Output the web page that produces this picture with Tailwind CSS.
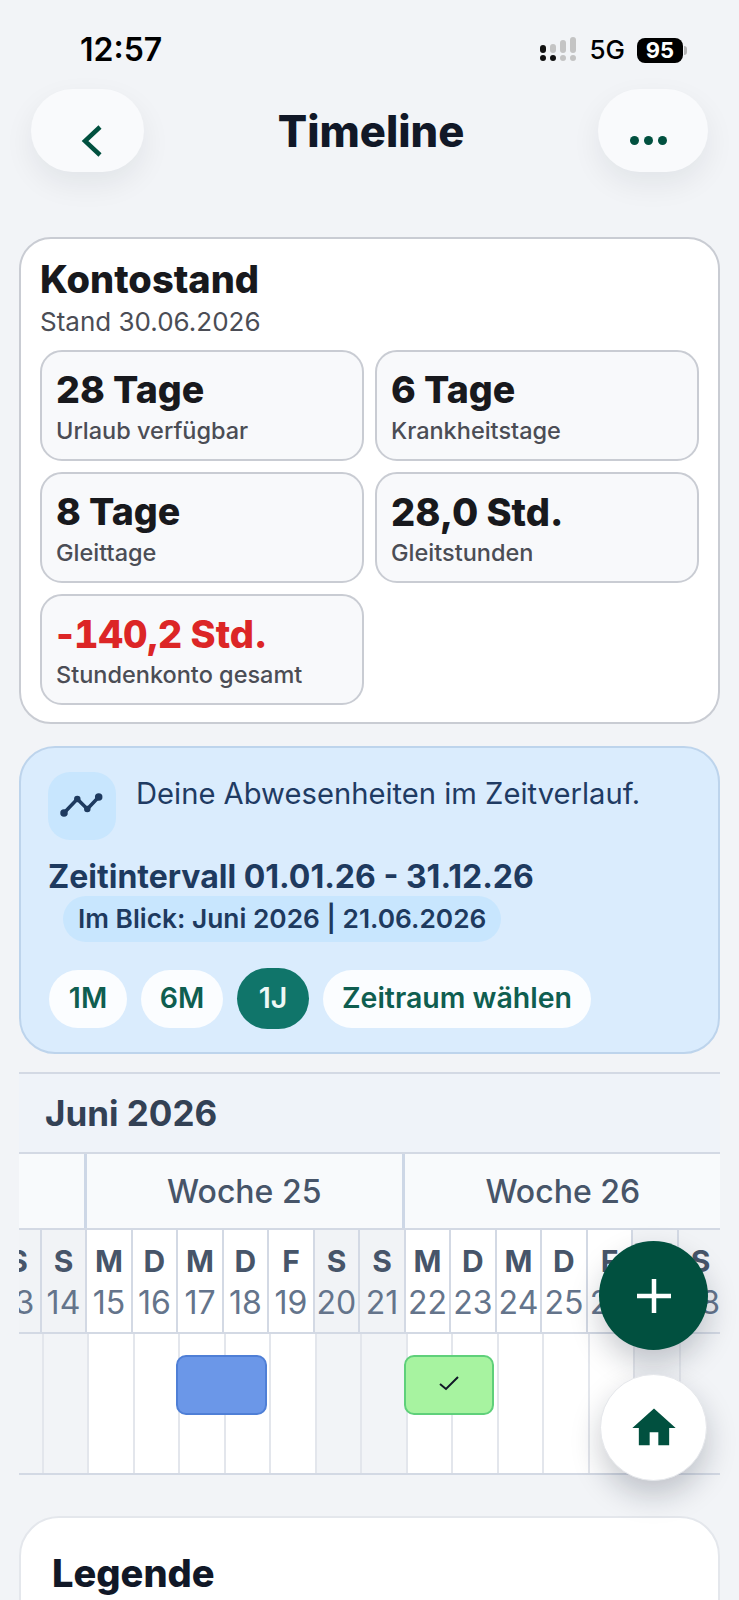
<!DOCTYPE html>
<html lang="de">
<head>
  <meta charset="UTF-8">
  <title>Timeline</title>
  <script src="https://cdn.jsdelivr.net/npm/@tailwindcss/browser@4"></script>
</head>
<body class="relative h-[1600px] w-[739px] overflow-hidden bg-[#f2f4f7] font-[Inter,sans-serif]">

  <!-- status bar -->
  <div class="flex h-[89px] items-start justify-between pl-[80px] pr-[52px] pt-[32px]">
    <span class="text-[32px] leading-[36px] font-semibold text-black">12:57</span>
    <div class="flex items-center pt-[5px]">
      <svg width="36" height="26" viewBox="0 0 36 26">
        <rect x="0" y="8" width="6" height="8" rx="3" fill="#111"/>
        <rect x="10" y="7" width="6" height="9" rx="3" fill="#c4c4c4"/>
        <rect x="20" y="3" width="6" height="13" rx="3" fill="#c4c4c4"/>
        <rect x="30" y="0" width="6" height="16" rx="3" fill="#c4c4c4"/>
        <circle cx="3" cy="21" r="3" fill="#111"/>
        <circle cx="13" cy="21" r="3" fill="#111"/>
        <circle cx="23" cy="21" r="3" fill="#c4c4c4"/>
        <circle cx="33" cy="21" r="3" fill="#c4c4c4"/>
      </svg>
      <span class="ml-[13px] text-[26px] leading-[26px] font-medium text-black">5G</span>
      <span class="ml-[12px] flex h-[25px] w-[46px] items-center justify-center rounded-[8px] bg-black text-[22px] leading-[25px] font-bold text-white">95</span>
      <span class="ml-[1px] h-[9px] w-[3px] rounded-r-full bg-[#b5b5b5]"></span>
    </div>
  </div>

  <!-- header -->
  <div class="flex h-[83px] items-center justify-between pl-[31px] pr-[31px]">
    <button class="flex h-[83px] w-[113px] items-center justify-center rounded-[42px] bg-[#f9fafc] pl-[8px] shadow-[0_12px_30px_rgba(15,23,42,0.07)]">
      <svg class="mt-[20px]" width="22" height="32" viewBox="0 0 22 32" fill="none" stroke="#01503f" stroke-width="4.5">
        <path d="M19 2 L4 16 L19 30"/>
      </svg>
    </button>
    <h1 class="text-[43.5px] leading-[50px] font-extrabold text-[#111827]">Timeline</h1>
    <button class="flex h-[83px] w-[110px] items-center justify-center gap-[5px] rounded-[42px] bg-[#f9fafc] pr-[9px] pt-[19px] shadow-[0_12px_30px_rgba(15,23,42,0.07)]">
      <span class="h-[9px] w-[9px] rounded-full bg-[#01503f]"></span>
      <span class="h-[9px] w-[9px] rounded-full bg-[#01503f]"></span>
      <span class="h-[9px] w-[9px] rounded-full bg-[#01503f]"></span>
    </button>
  </div>

  <main class="mt-[65px] px-[19px]">

    <!-- Kontostand -->
    <section class="h-[487px] rounded-[32px] border-2 border-[#c9ccd3] bg-white px-[19px] pt-[18px]">
      <h2 class="text-[38px] leading-[44px] font-extrabold text-[#18191d]">Kontostand</h2>
      <p class="mt-[6px] text-[26px] leading-[30px] text-[#4b4d55]">Stand 30.06.2026</p>
      <div class="mt-[13px] grid grid-cols-2 gap-[11px]">
        <div class="h-[111px] rounded-[22px] border-2 border-[#c9ccd3] bg-[#f8f9fb] px-[14px] pt-[16px]">
          <div class="text-[37.5px] leading-[44px] font-extrabold text-[#18191d]">28 Tage</div>
          <div class="mt-[4px] text-[23.5px] leading-[30px] font-medium text-[#4b4d55]">Urlaub verfügbar</div>
        </div>
        <div class="h-[111px] rounded-[22px] border-2 border-[#c9ccd3] bg-[#f8f9fb] px-[14px] pt-[16px]">
          <div class="text-[37.5px] leading-[44px] font-extrabold text-[#18191d]">6 Tage</div>
          <div class="mt-[4px] text-[23.5px] leading-[30px] font-medium text-[#4b4d55]">Krankheitstage</div>
        </div>
        <div class="h-[111px] rounded-[22px] border-2 border-[#c9ccd3] bg-[#f8f9fb] px-[14px] pt-[16px]">
          <div class="text-[37.5px] leading-[44px] font-extrabold text-[#18191d]">8 Tage</div>
          <div class="mt-[4px] text-[23.5px] leading-[30px] font-medium text-[#4b4d55]">Gleittage</div>
        </div>
        <div class="h-[111px] rounded-[22px] border-2 border-[#c9ccd3] bg-[#f8f9fb] px-[14px] pt-[16px]">
          <div class="text-[38px] leading-[44px] font-extrabold text-[#18191d]">28,0 Std.</div>
          <div class="mt-[4px] text-[23.5px] leading-[30px] font-medium text-[#4b4d55]">Gleitstunden</div>
        </div>
        <div class="h-[111px] rounded-[22px] border-2 border-[#c9ccd3] bg-[#f8f9fb] px-[14px] pt-[16px]">
          <div class="text-[38px] leading-[44px] font-extrabold text-[#dc2626]">-<span class="tabular-nums">140,2</span> Std.</div>
          <div class="mt-[4px] text-[23.5px] leading-[30px] font-medium text-[#4b4d55]">Stundenkonto gesamt</div>
        </div>
      </div>
    </section>

    <!-- Zeitraum -->
    <section class="mt-[22px] h-[308px] rounded-[36px] border-2 border-[#bdd4ec] bg-[#daecfd] pl-[27px] pt-[24px]">
      <div class="flex items-start gap-[20px]">
        <div class="flex h-[68px] w-[68px] items-center justify-center rounded-[22px] bg-[#c8e6fe]">
          <svg width="46" height="28" viewBox="0 0 46 28" fill="none" stroke="#1e3a5f" stroke-width="3.5" stroke-linecap="round" stroke-linejoin="round">
            <path d="M5 21 L18.3 7 L28.3 17 L39.7 5"/>
            <circle cx="5" cy="21" r="2" fill="#1e3a5f"/>
            <circle cx="18.3" cy="7" r="1.5" fill="#1e3a5f"/>
            <circle cx="28.3" cy="17" r="1.5" fill="#1e3a5f"/>
            <circle cx="39.7" cy="5" r="2" fill="#1e3a5f"/>
          </svg>
        </div>
        <p class="text-[29.2px] leading-[44px] text-[#1f3b63]">Deine Abwesenheiten im Zeitverlauf.</p>
      </div>
      <div class="mt-[18px] text-[32px] leading-[38px] font-bold text-[#1e3a5f]">Zeitintervall 01.01.26 - 31.12.26</div>
      <div class="ml-[15px] flex h-[46px] w-fit items-center rounded-full bg-[#c8e6fe] px-[15px] text-[26.3px] font-semibold text-[#1e3a5f]">Im Blick: Juni 2026 | 21.06.2026</div>
      <div class="ml-[1px] mt-[26px] flex items-center gap-[14px] text-[28.5px] font-semibold text-[#0f5e50]">
        <button class="flex h-[58px] w-[78px] items-center justify-center rounded-full bg-[#fbfdff]">1M</button>
        <button class="flex h-[58px] w-[82px] items-center justify-center rounded-full bg-[#fbfdff]">6M</button>
        <button class="flex h-[61px] w-[72px] items-center justify-center rounded-full bg-[#10756a] text-[#eef8f6]">1J</button>
        <button class="flex h-[58px] w-[268px] items-center justify-center rounded-full bg-[#fbfdff]">Zeitraum wählen</button>
      </div>
    </section>
  </main>

  <!-- timeline -->
  <section class="ml-[19px] mt-[18px] h-[403px] w-[701px] overflow-hidden border-y-2 border-[#d3d9e4]">
    <div class="flex h-[80px] items-center border-b-2 border-[#d3d9e4] bg-[#eff3f9] pl-[26px] text-[35px] font-bold text-[#334155]">Juni 2026</div>

    <div class="flex h-[76px] border-b-2 border-[#d3d9e4] bg-[#f8fafc] text-[32px] font-medium text-[#475569]">
      <div class="w-[64.5px] shrink-0"></div>
      <div class="flex w-[318.5px] shrink-0 items-center justify-center border-l-[3px] border-[#cdd7e6] pt-[2px]">Woche 25</div>
      <div class="flex w-[318.5px] shrink-0 items-center justify-center border-l-[3px] border-[#cdd7e6] pt-[2px]">Woche 26</div>
    </div>

    <div class="ml-[-22.8px] flex h-[104px] w-[800px] border-b-2 border-[#d3d9e4] text-center">
      <div class="w-[45.5px] shrink-0 border-r-2 border-[#d3d9e4] bg-[#f1f3f6] pt-[14px]"><div class="text-[30px] leading-[34px] font-bold text-[#475569]">S</div><div class="mt-[7px] text-[32px] leading-[36px] text-[#64748b]">13</div></div>
      <div class="w-[45.5px] shrink-0 border-r-2 border-[#d3d9e4] bg-[#f1f3f6] pt-[14px]"><div class="text-[30px] leading-[34px] font-bold text-[#475569]">S</div><div class="mt-[7px] text-[32px] leading-[36px] text-[#64748b]">14</div></div>
      <div class="w-[45.5px] shrink-0 border-r-2 border-[#d3d9e4] bg-white pt-[14px]"><div class="text-[30px] leading-[34px] font-bold text-[#475569]">M</div><div class="mt-[7px] text-[32px] leading-[36px] text-[#64748b]">15</div></div>
      <div class="w-[45.5px] shrink-0 border-r-2 border-[#d3d9e4] bg-white pt-[14px]"><div class="text-[30px] leading-[34px] font-bold text-[#475569]">D</div><div class="mt-[7px] text-[32px] leading-[36px] text-[#64748b]">16</div></div>
      <div class="w-[45.5px] shrink-0 border-r-2 border-[#d3d9e4] bg-white pt-[14px]"><div class="text-[30px] leading-[34px] font-bold text-[#475569]">M</div><div class="mt-[7px] text-[32px] leading-[36px] text-[#64748b]">17</div></div>
      <div class="w-[45.5px] shrink-0 border-r-2 border-[#d3d9e4] bg-white pt-[14px]"><div class="text-[30px] leading-[34px] font-bold text-[#475569]">D</div><div class="mt-[7px] text-[32px] leading-[36px] text-[#64748b]">18</div></div>
      <div class="w-[45.5px] shrink-0 border-r-2 border-[#d3d9e4] bg-white pt-[14px]"><div class="text-[30px] leading-[34px] font-bold text-[#475569]">F</div><div class="mt-[7px] text-[32px] leading-[36px] text-[#64748b]">19</div></div>
      <div class="w-[45.5px] shrink-0 border-r-2 border-[#d3d9e4] bg-[#f1f3f6] pt-[14px]"><div class="text-[30px] leading-[34px] font-bold text-[#475569]">S</div><div class="mt-[7px] text-[32px] leading-[36px] text-[#64748b]">20</div></div>
      <div class="w-[45.5px] shrink-0 border-r-2 border-[#d3d9e4] bg-[#f1f3f6] pt-[14px]"><div class="text-[30px] leading-[34px] font-bold text-[#475569]">S</div><div class="mt-[7px] text-[32px] leading-[36px] text-[#64748b]">21</div></div>
      <div class="w-[45.5px] shrink-0 border-r-2 border-[#d3d9e4] bg-white pt-[14px]"><div class="text-[30px] leading-[34px] font-bold text-[#475569]">M</div><div class="mt-[7px] text-[32px] leading-[36px] text-[#64748b]">22</div></div>
      <div class="w-[45.5px] shrink-0 border-r-2 border-[#d3d9e4] bg-white pt-[14px]"><div class="text-[30px] leading-[34px] font-bold text-[#475569]">D</div><div class="mt-[7px] text-[32px] leading-[36px] text-[#64748b]">23</div></div>
      <div class="w-[45.5px] shrink-0 border-r-2 border-[#d3d9e4] bg-white pt-[14px]"><div class="text-[30px] leading-[34px] font-bold text-[#475569]">M</div><div class="mt-[7px] text-[32px] leading-[36px] text-[#64748b]">24</div></div>
      <div class="w-[45.5px] shrink-0 border-r-2 border-[#d3d9e4] bg-white pt-[14px]"><div class="text-[30px] leading-[34px] font-bold text-[#475569]">D</div><div class="mt-[7px] text-[32px] leading-[36px] text-[#64748b]">25</div></div>
      <div class="w-[45.5px] shrink-0 border-r-2 border-[#d3d9e4] bg-white pt-[14px]"><div class="text-[30px] leading-[34px] font-bold text-[#475569]">F</div><div class="mt-[7px] text-[32px] leading-[36px] text-[#64748b]">26</div></div>
      <div class="w-[45.5px] shrink-0 border-r-2 border-[#d3d9e4] bg-[#f1f3f6] pt-[14px]"><div class="text-[30px] leading-[34px] font-bold text-[#475569]">S</div><div class="mt-[7px] text-[32px] leading-[36px] text-[#64748b]">27</div></div>
      <div class="w-[45.5px] shrink-0 border-r-2 border-[#d3d9e4] bg-[#f1f3f6] pt-[14px]"><div class="text-[30px] leading-[34px] font-bold text-[#475569]">S</div><div class="mt-[7px] text-[32px] leading-[36px] text-[#64748b]">28</div></div>
    </div>

    <div class="relative h-[139px]">
      <div class="ml-[-20.8px] flex h-full w-[800px]">
        <div class="w-[45.5px] shrink-0 border-r-2 border-[#e3e6ec] bg-[#f2f4f7]"></div>
        <div class="w-[45.5px] shrink-0 border-r-2 border-[#e3e6ec] bg-[#f2f4f7]"></div>
        <div class="w-[45.5px] shrink-0 border-r-2 border-[#e3e6ec] bg-white"></div>
        <div class="w-[45.5px] shrink-0 border-r-2 border-[#e3e6ec] bg-white"></div>
        <div class="w-[45.5px] shrink-0 border-r-2 border-[#e3e6ec] bg-white"></div>
        <div class="w-[45.5px] shrink-0 border-r-2 border-[#e3e6ec] bg-white"></div>
        <div class="w-[45.5px] shrink-0 border-r-2 border-[#e3e6ec] bg-white"></div>
        <div class="w-[45.5px] shrink-0 border-r-2 border-[#e3e6ec] bg-[#f2f4f7]"></div>
        <div class="w-[45.5px] shrink-0 border-r-2 border-[#e3e6ec] bg-[#f2f4f7]"></div>
        <div class="w-[45.5px] shrink-0 border-r-2 border-[#e3e6ec] bg-white"></div>
        <div class="w-[45.5px] shrink-0 border-r-2 border-[#e3e6ec] bg-white"></div>
        <div class="w-[45.5px] shrink-0 border-r-2 border-[#e3e6ec] bg-white"></div>
        <div class="w-[45.5px] shrink-0 border-r-2 border-[#e3e6ec] bg-white"></div>
        <div class="w-[45.5px] shrink-0 border-r-2 border-[#e3e6ec] bg-white"></div>
        <div class="w-[45.5px] shrink-0 border-r-2 border-[#e3e6ec] bg-[#f2f4f7]"></div>
        <div class="w-[45.5px] shrink-0 border-r-2 border-[#e3e6ec] bg-[#f2f4f7]"></div>
      </div>
      <div class="absolute left-[157px] top-[21px] h-[60px] w-[91px] rounded-[10px] border-2 border-[#4f7fd6] bg-[#6b97e8]"></div>
      <div class="absolute left-[384.5px] top-[21px] flex h-[60px] w-[90px] items-start justify-center rounded-[10px] border-2 border-[#5fd07a] bg-[#a7f3a0] pt-[18px]">
        <svg width="20" height="16" viewBox="0 0 20 16" fill="none" stroke="#111827" stroke-width="2"><path d="M1 9 L7 14 L19 2"/></svg>
      </div>
    </div>
  </section>

  <!-- Legende -->
  <section class="ml-[19px] mt-[41px] h-[200px] w-[701px] rounded-[40px] border-2 border-[#e4e7ec] bg-white pl-[31px] pt-[33px]">
    <h2 class="text-[38px] leading-[44px] font-extrabold text-[#111827]">Legende</h2>
  </section>

  <!-- floating buttons -->
  <button class="absolute left-[599px] top-[1241px] flex h-[109px] w-[109px] items-center justify-center rounded-full bg-[#01503f] shadow-[0_14px_30px_rgba(15,23,42,0.22)]">
    <svg width="36" height="36" viewBox="0 0 36 36" fill="none" stroke="white" stroke-width="4.5"><path d="M18 1 V35 M1 18 H35"/></svg>
  </button>
  <button class="absolute left-[600px] top-[1374px] flex h-[107px] w-[107px] items-center justify-center rounded-full border border-[#e5e7eb] bg-white shadow-[0_14px_30px_rgba(15,23,42,0.22)]">
    <svg width="52" height="52" viewBox="0 0 24 24" fill="#01503f"><path d="M10 20v-6h4v6h5v-8h3L12 3 2 12h3v8z"/></svg>
  </button>

</body>
</html>
